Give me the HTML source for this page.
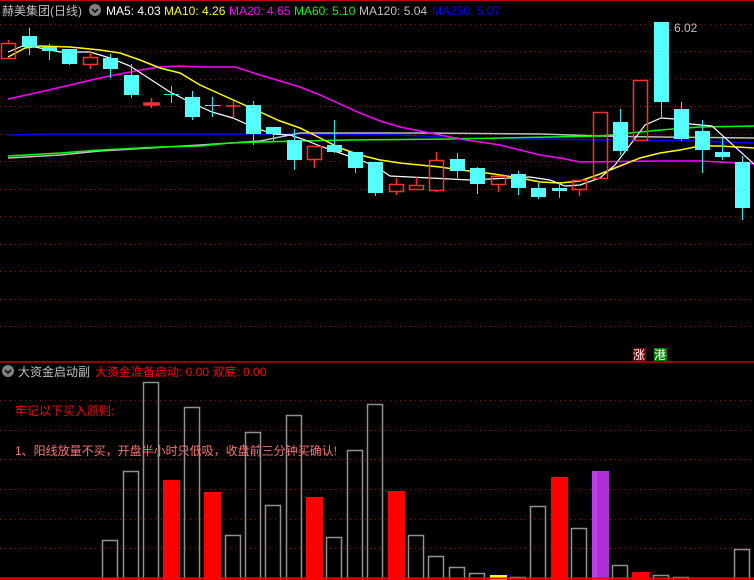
<!DOCTYPE html>
<html><head><meta charset="utf-8"><style>
html,body{margin:0;padding:0;background:#000;width:754px;height:580px;overflow:hidden}
svg{display:block}
text{font-family:"Liberation Sans","Noto Sans CJK SC",sans-serif;font-size:12px}
</style></head><body>
<svg width="754" height="580" viewBox="0 0 754 580" xmlns="http://www.w3.org/2000/svg">
<rect width="754" height="580" fill="#000"/>
<line x1="0" y1="0.5" x2="754" y2="0.5" stroke="#c00000"/>
<g stroke="#a00000" stroke-dasharray="1,4" stroke-width="1">
<line x1="0" y1="24.5" x2="754" y2="24.5"/><line x1="0" y1="51.5" x2="754" y2="51.5"/>
<line x1="0" y1="79.5" x2="754" y2="79.5"/><line x1="0" y1="106.5" x2="754" y2="106.5"/>
<line x1="0" y1="134.5" x2="754" y2="134.5"/><line x1="0" y1="161.5" x2="754" y2="161.5"/>
<line x1="0" y1="189.5" x2="754" y2="189.5"/><line x1="0" y1="216.5" x2="754" y2="216.5"/>
<line x1="0" y1="244.5" x2="754" y2="244.5"/><line x1="0" y1="271.5" x2="754" y2="271.5"/>
<line x1="0" y1="299.5" x2="754" y2="299.5"/><line x1="0" y1="326.5" x2="754" y2="326.5"/>
<line x1="0" y1="400.5" x2="754" y2="400.5"/><line x1="0" y1="430.5" x2="754" y2="430.5"/>
<line x1="0" y1="459.5" x2="754" y2="459.5"/><line x1="0" y1="489.5" x2="754" y2="489.5"/>
<line x1="0" y1="519.5" x2="754" y2="519.5"/><line x1="0" y1="548.5" x2="754" y2="548.5"/>
</g>
<g fill="none" stroke-width="1.5">
<polyline stroke="#0000ff" points="8,135 60,134 300,134 400,135 460,138 540,139 600,140 640,140 700,141 754,143"/>
<polyline stroke="#c0c0c0" points="8,158 60,155 100,151 150,148 200,145 260,141 300,133 420,133 540,134 600,136 660,137 754,138"/>
<polyline stroke="#00ff00" points="8,156 60,153 100,150 160,147 200,146 230,143 260,142 300,141 350,140 450,139 550,137 600,136 640,132 660,130 700,127 754,126"/>
<polyline stroke="#ff00ff" points="8,99 40,92 70,85 100,78 120,74 140,70 160,67 180,66 200,67 235,67 260,75 280,81 300,87 320,95 340,104 360,113 380,121 400,127 420,131 440,135 460,139 480,142 500,145 520,150 540,155 560,158 580,162 660,161 700,161 720,162 754,164"/>
<polyline stroke="#ffff00" points="8,57 25,48 40,46 70,47 100,50 120,53 140,60 160,68 180,73 200,85 220,94 240,103 260,112 280,121 300,128 320,138 340,148 360,155 380,160 400,163 420,165 440,167 460,170 480,172 500,175 520,178 540,182 560,183 580,181 600,174 620,166 640,158 660,153 680,150 700,146 720,146 754,148"/>
<polyline stroke="#ffffff" stroke-width="1.2" points="8,52 25,45 40,48 60,52 90,52 110,58 130,66 150,79 170,92 190,102 212,112 233,118 253,127 273,134 290,135 305,140 320,146 340,153 360,160 375,166 390,176 410,177 430,178 450,179 470,180 490,179 510,178 530,177 550,180 565,186 580,185 600,178 615,165 630,145 645,125 661,118 675,119 690,124 712,126 754,164"/>
</g>
<g stroke="#00ffff" fill="#55ffff">
<line x1="29.5" y1="28" x2="29.5" y2="55"/><rect x="22" y="36" width="15" height="11" stroke="none"/>
<line x1="49.5" y1="44" x2="49.5" y2="60"/><rect x="42" y="47" width="15" height="4" stroke="none"/>
<line x1="69.5" y1="49" x2="69.5" y2="65"/><rect x="62" y="49" width="15" height="15" stroke="none"/>
<line x1="110.5" y1="54" x2="110.5" y2="78"/><rect x="103" y="58" width="15" height="11" stroke="none"/>
<line x1="131.5" y1="64" x2="131.5" y2="98"/><rect x="124" y="75" width="15" height="20" stroke="none"/>
<line x1="171.5" y1="86" x2="171.5" y2="103"/><line x1="164" y1="94.5" x2="179" y2="94.5"/>
<line x1="192.5" y1="91" x2="192.5" y2="120"/><rect x="185" y="97" width="15" height="20" stroke="none"/>
<line x1="212.5" y1="97" x2="212.5" y2="117"/><line x1="205" y1="105.5" x2="220" y2="105.5"/>
<line x1="253.5" y1="101" x2="253.5" y2="145"/><rect x="246" y="105" width="15" height="29" stroke="none"/>
<line x1="273.5" y1="127" x2="273.5" y2="142"/><rect x="266" y="127" width="15" height="7" stroke="none"/>
<line x1="294.5" y1="129" x2="294.5" y2="170"/><rect x="287" y="140" width="15" height="20" stroke="none"/>
<line x1="334.5" y1="120" x2="334.5" y2="153"/><rect x="327" y="145" width="15" height="7" stroke="none"/>
<line x1="355.5" y1="152" x2="355.5" y2="173"/><rect x="348" y="152" width="15" height="16" stroke="none"/>
<line x1="375.5" y1="162" x2="375.5" y2="196"/><rect x="368" y="162" width="15" height="31" stroke="none"/>
<line x1="457.5" y1="153" x2="457.5" y2="178"/><rect x="450" y="159" width="15" height="12" stroke="none"/>
<line x1="477.5" y1="167" x2="477.5" y2="194"/><rect x="470" y="168" width="15" height="16" stroke="none"/>
<line x1="518.5" y1="171" x2="518.5" y2="195"/><rect x="511" y="174" width="15" height="14" stroke="none"/>
<line x1="538.5" y1="183" x2="538.5" y2="199"/><rect x="531" y="188" width="15" height="9" stroke="none"/>
<line x1="559.5" y1="182" x2="559.5" y2="198"/><rect x="552" y="188" width="15" height="3" stroke="none"/>
<line x1="620.5" y1="109" x2="620.5" y2="155"/><rect x="613" y="122" width="15" height="29" stroke="none"/>
<line x1="661.5" y1="22" x2="661.5" y2="117"/><rect x="654" y="22" width="15" height="80" stroke="none"/>
<line x1="681.5" y1="102" x2="681.5" y2="141"/><rect x="674" y="109" width="15" height="30" stroke="none"/>
<line x1="702.5" y1="120" x2="702.5" y2="173"/><rect x="695" y="131" width="15" height="19" stroke="none"/>
<line x1="722.5" y1="138" x2="722.5" y2="160"/><rect x="715" y="152" width="15" height="5" stroke="none"/>
<line x1="742.5" y1="156" x2="742.5" y2="220"/><rect x="735" y="162" width="15" height="46" stroke="none"/>
</g>
<g stroke="#ff3030" fill="none" stroke-width="1.5">
<line x1="8.5" y1="40" x2="8.5" y2="43"/><rect x="1.5" y="43.5" width="14" height="15"/>
<line x1="90.5" y1="52" x2="90.5" y2="57"/><line x1="90.5" y1="64" x2="90.5" y2="69"/><rect x="83.5" y="57.5" width="14" height="7"/>
<line x1="151.5" y1="98" x2="151.5" y2="108"/><rect x="144" y="103" width="15" height="2" fill="#ff3030"/>
<line x1="233.5" y1="101" x2="233.5" y2="117"/><line x1="226" y1="106" x2="240" y2="106"/>
<line x1="314.5" y1="159" x2="314.5" y2="168"/><rect x="307.5" y="146.5" width="14" height="13"/>
<line x1="396.5" y1="178" x2="396.5" y2="184"/><line x1="396.5" y1="191" x2="396.5" y2="195"/><rect x="389.5" y="184.5" width="14" height="7"/>
<line x1="416.5" y1="177" x2="416.5" y2="185"/><rect x="409.5" y="185.5" width="14" height="4"/>
<line x1="436.5" y1="152" x2="436.5" y2="160"/><line x1="436.5" y1="190" x2="436.5" y2="192"/><rect x="429.5" y="160.5" width="14" height="30"/>
<line x1="498.5" y1="184" x2="498.5" y2="192"/><rect x="491.5" y="176.5" width="14" height="8"/>
<line x1="579.5" y1="189" x2="579.5" y2="196"/><rect x="572.5" y="180.5" width="14" height="9"/>
<rect x="593.5" y="112.5" width="14" height="66"/>
<rect x="633.5" y="80.5" width="14" height="60"/>
</g>
<text x="662" y="32" fill="#c0c0c0" font-size="12">←6.02</text>
<text x="2" y="15" fill="#c0c0c0" font-size="13">赫美集团(日线)</text>
<circle cx="95" cy="10" r="6" fill="#808080"/><path d="M92 9l3 3 3-3" stroke="#000" fill="none" stroke-width="1.5"/>
<text x="106" y="15" fill="#ffffff">MA5: 4.03</text>
<text x="164" y="15" fill="#ffff00">MA10: 4.26</text>
<text x="229" y="15" fill="#ff00ff">MA20: 4.65</text>
<text x="294" y="15" fill="#00ff00">MA60: 5.10</text>
<text x="359" y="15" fill="#c0c0c0">MA120: 5.04</text>
<text x="432" y="15" fill="#0000ff">MA250: 5.07</text>
<rect x="633" y="348" width="13" height="13" fill="#800000"/><text x="633" y="359" fill="#fff" font-size="12">涨</text>
<rect x="654" y="348" width="13" height="13" fill="#008000"/><text x="654" y="359" fill="#fff" font-size="12">港</text>
<line x1="0" y1="362" x2="754" y2="362" stroke="#c00000" stroke-width="1.5"/>
<circle cx="8" cy="371" r="6" fill="#808080"/><path d="M5 370l3 3 3-3" stroke="#000" fill="none" stroke-width="1.5"/>
<text x="18" y="376" fill="#c0c0c0" font-size="12">大资金启动副</text>
<text x="95" y="376" fill="#ff0000" font-size="12">大资金准备启动: 0.00  双底: 0.00</text>
<g fill="none" stroke="#909090" stroke-width="1.5">
<rect x="102.5" y="540.5" width="15" height="40"/>
<rect x="123.5" y="471.5" width="15" height="110"/>
<rect x="143.5" y="382.5" width="15" height="200"/>
<rect x="184.5" y="407.5" width="15" height="180"/>
<rect x="225.5" y="535.5" width="15" height="50"/>
<rect x="245.5" y="432.5" width="15" height="150"/>
<rect x="265.5" y="505.5" width="15" height="80"/>
<rect x="286.5" y="415.5" width="15" height="170"/>
<rect x="326.5" y="537.5" width="15" height="50"/>
<rect x="347.5" y="450.5" width="15" height="140"/>
<rect x="367.5" y="404.5" width="15" height="180"/>
<rect x="408.5" y="535.5" width="15" height="50"/>
<rect x="428.5" y="556.5" width="15" height="30"/>
<rect x="449.5" y="567.5" width="15" height="20"/>
<rect x="469.5" y="573.5" width="15" height="10"/>
<rect x="510.5" y="577.5" width="15" height="10"/>
<rect x="530.5" y="506.5" width="15" height="80"/>
<rect x="571.5" y="528.5" width="15" height="60"/>
<rect x="612.5" y="565.5" width="15" height="20"/>
<rect x="653.5" y="575.5" width="15" height="10"/>
<rect x="673.5" y="577.5" width="15" height="10"/>
<rect x="734.5" y="549.5" width="15" height="40"/>
</g>
<g fill="#ff0000">
<rect x="163" y="480" width="17" height="100"/>
<rect x="204" y="492" width="17" height="90"/>
<rect x="306" y="497" width="17" height="90"/>
<rect x="388" y="491" width="17" height="90"/>
<rect x="551" y="477" width="17" height="110"/>
<rect x="632" y="572" width="17" height="10"/>
</g>
<rect x="490" y="575" width="17" height="5" fill="#ffff00"/>
<rect x="592" y="471" width="5" height="110" fill="#c040e8"/>
<rect x="597" y="471" width="12" height="110" fill="#b030d8"/>
<line x1="0" y1="578.5" x2="754" y2="578.5" stroke="#ff0000" stroke-width="2"/>
<text x="15" y="415" fill="#ff0000" font-size="12">牢记以下买入原则:</text>
<text x="15" y="455" fill="#ff7070" font-size="12">1、阳线放量不买，开盘半小时只低吸，收盘前三分钟买确认!</text>
</svg>
</body></html>
